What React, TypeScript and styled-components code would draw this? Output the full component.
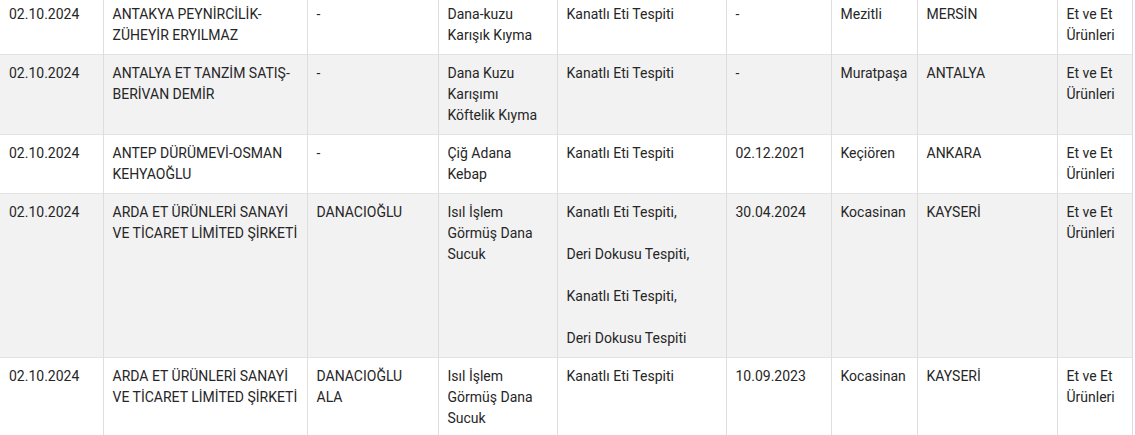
import React from "react";
import styled, { createGlobalStyle } from "styled-components";

const GlobalStyle = createGlobalStyle`
  html, body {
    margin: 0;
    padding: 0;
    background: #ffffff;
  }
  body {
    font-family: Roboto, "Liberation Sans", Arial, sans-serif;
    overflow: hidden;
  }
`;

type Row = {
  date: string;
  company: string;
  brand: string;
  product: string;
  findings: string[];
  batch: string;
  district: string;
  city: string;
  group: string;
};

const rows: Row[] = [
  {
    date: "02.10.2024",
    company: "ANTAKYA PEYNİRCİLİK-ZÜHEYİR ERYILMAZ",
    brand: "-",
    product: "Dana-kuzu Karışık Kıyma",
    findings: ["Kanatlı Eti Tespiti"],
    batch: "-",
    district: "Mezitli",
    city: "MERSİN",
    group: "Et ve Et Ürünleri",
  },
  {
    date: "02.10.2024",
    company: "ANTALYA ET TANZİM SATIŞ-BERİVAN DEMİR",
    brand: "-",
    product: "Dana Kuzu Karışımı Köftelik Kıyma",
    findings: ["Kanatlı Eti Tespiti"],
    batch: "-",
    district: "Muratpaşa",
    city: "ANTALYA",
    group: "Et ve Et Ürünleri",
  },
  {
    date: "02.10.2024",
    company: "ANTEP DÜRÜMEVİ-OSMAN KEHYAOĞLU",
    brand: "-",
    product: "Çiğ Adana Kebap",
    findings: ["Kanatlı Eti Tespiti"],
    batch: "02.12.2021",
    district: "Keçiören",
    city: "ANKARA",
    group: "Et ve Et Ürünleri",
  },
  {
    date: "02.10.2024",
    company: "ARDA ET ÜRÜNLERİ SANAYİ VE TİCARET LİMİTED ŞİRKETİ",
    brand: "DANACIOĞLU",
    product: "Isıl İşlem Görmüş Dana Sucuk",
    findings: [
      "Kanatlı Eti Tespiti,",
      "Deri Dokusu Tespiti,",
      "Kanatlı Eti Tespiti,",
      "Deri Dokusu Tespiti",
    ],
    batch: "30.04.2024",
    district: "Kocasinan",
    city: "KAYSERİ",
    group: "Et ve Et Ürünleri",
  },
  {
    date: "02.10.2024",
    company: "ARDA ET ÜRÜNLERİ SANAYİ VE TİCARET LİMİTED ŞİRKETİ",
    brand: "DANACIOĞLU ALA",
    product: "Isıl İşlem Görmüş Dana Sucuk",
    findings: ["Kanatlı Eti Tespiti"],
    batch: "10.09.2023",
    district: "Kocasinan",
    city: "KAYSERİ",
    group: "Et ve Et Ürünleri",
  },
];

const widths = [103, 204, 131, 119, 169, 105, 86, 140, 75];

export default function App() {
  return (
    <>
      <GlobalStyle />
      <Scroller>
        <Table>
          <colgroup>
            {widths.map((w, i) => (
              <col key={i} style={{ width: w }} />
            ))}
          </colgroup>
          <tbody>
            {rows.map((r, i) => (
              <Tr key={i} $striped={i % 2 === 1}>
                <Td>{r.date}</Td>
                <Td>{r.company}</Td>
                <Td>{r.brand}</Td>
                <Td>{r.product}</Td>
                <Td>
                  {r.findings.map((f, j) => (
                    <React.Fragment key={j}>
                      {j > 0 && (
                        <>
                          <br />
                          <br />
                        </>
                      )}
                      {f}
                    </React.Fragment>
                  ))}
                </Td>
                <Td>{r.batch}</Td>
                <Td>{r.district}</Td>
                <Td>{r.city}</Td>
                <Td>{r.group}</Td>
              </Tr>
            ))}
          </tbody>
        </Table>
      </Scroller>
    </>
  );
}

// the list is scrolled a few pixels past the first row's top
const Scroller = styled.div`
  margin-top: -4px;
  width: 1132px;
`;

const Table = styled.table`
  width: 1132px;
  table-layout: fixed;
  border-collapse: collapse;
  font-size: 14px;
  line-height: 21px;
  color: #262626;
`;

const Tr = styled.tr<{ $striped: boolean }>`
  background: ${(p) => (p.$striped ? "#f2f2f2" : "#ffffff")};
  border-bottom: 1px solid #e3e3e3;
`;

const Td = styled.td`
  padding: 8px 9px 8px 9px;
  vertical-align: top;
  border-left: 1px solid #dedede;
  border-right: 1px solid #dedede;
  word-wrap: break-word;

  &:first-child {
    border-left: none;
  }
`;
